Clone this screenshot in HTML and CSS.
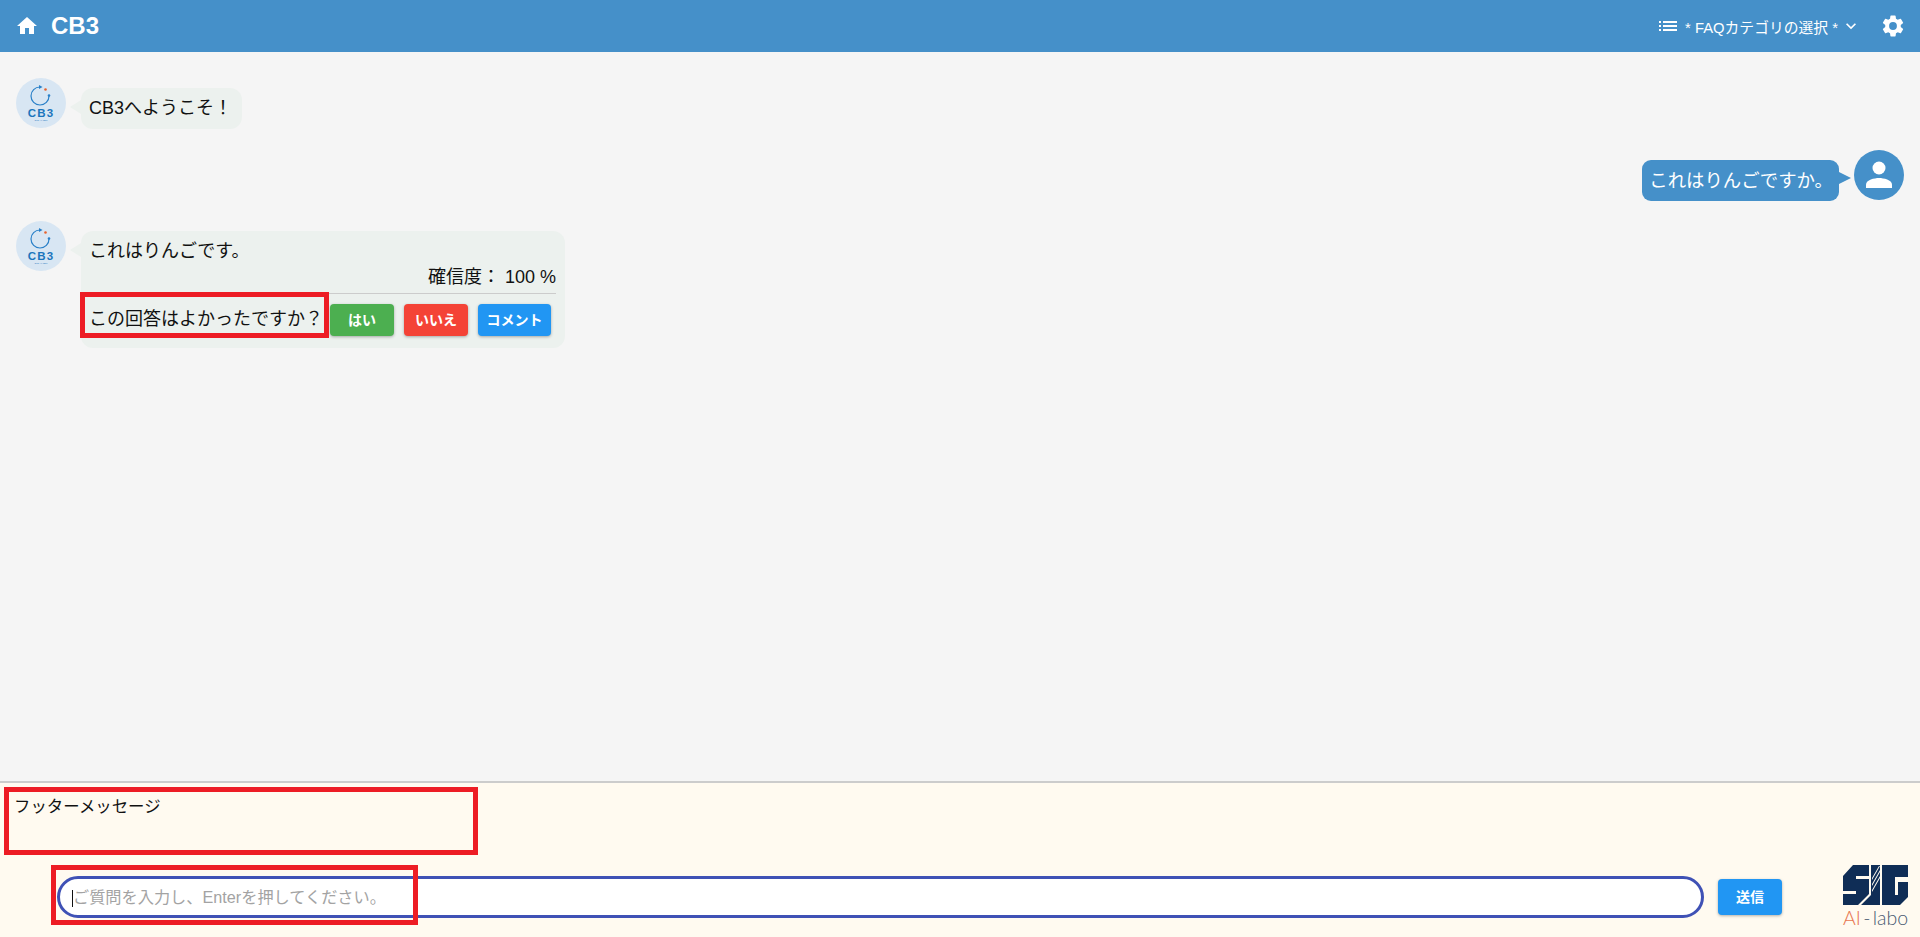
FILE: index.html
```html
<!DOCTYPE html>
<html lang="ja">

<head>
    <meta charset="UTF-8">
    <meta name="viewport" content="width=device-width, initial-scale=1.0">
    <title>CB3</title>
    <link rel="stylesheet" href="styles.css">
</head>

<body>
    <header class="topbar">
        <svg class="icon home-icon" viewBox="0 0 24 24"><path d="M10 20v-6h4v6h5v-8h3L12 3 2 12h3v8z"/></svg>
        <h1 class="brand">CB3</h1>
        <div class="category">
            <svg class="icon list-icon" viewBox="0 0 24 24"><path d="M3 13h2v-2H3v2zm0 4h2v-2H3v2zm0-8h2V7H3v2zm4 4h14v-2H7v2zm0 4h14v-2H7v2zM7 7v2h14V7H7z"/></svg>
            <span class="category-text">* FAQカテゴリの選択 *</span>
            <svg class="icon chevron-icon" viewBox="0 0 24 24"><path d="M7.41 8.59 12 13.17l4.59-4.58L18 10l-6 6-6-6z"/></svg>
        </div>
        <svg class="icon gear-icon" viewBox="0 0 24 24"><path d="M19.14 12.94c.04-.3.06-.61.06-.94 0-.32-.02-.64-.07-.94l2.03-1.58a.49.49 0 0 0 .12-.61l-1.92-3.32a.49.49 0 0 0-.59-.22l-2.39.96c-.5-.38-1.03-.7-1.62-.94l-.36-2.54a.48.48 0 0 0-.48-.41h-3.84a.47.47 0 0 0-.47.41l-.36 2.54c-.59.24-1.13.57-1.62.94l-2.39-.96a.48.48 0 0 0-.59.22L2.74 8.87c-.12.21-.08.47.12.61l2.03 1.58c-.05.3-.09.63-.09.94s.02.64.07.94l-2.03 1.58a.49.49 0 0 0-.12.61l1.92 3.32c.12.22.37.29.59.22l2.39-.96c.5.38 1.03.7 1.62.94l.36 2.54c.05.24.24.41.48.41h3.84c.24 0 .44-.17.47-.41l.36-2.54c.59-.24 1.13-.56 1.62-.94l2.39.96c.22.08.47 0 .59-.22l1.92-3.32c.12-.22.07-.47-.12-.61l-2.01-1.58zM12 15.6A3.6 3.6 0 1 1 12 8.4a3.6 3.6 0 0 1 0 7.2z"/></svg>
    </header>

    <main class="chat">
        <div class="row">
            <svg class="avatar" viewBox="0 0 50 50">
                <circle cx="25" cy="25" r="25" fill="#d8e6f3"/>
                <path d="M24 9a9 9 0 1 0 9 9" fill="none" stroke="#2a80c8" stroke-width="1.2"/>
                <path d="M26.500 9 23 7v4z" fill="#2a80c8"/>
                <circle cx="33" cy="17.500" r="1.300" fill="#2a80c8"/>
                <circle cx="29.500" cy="11.500" r="1.300" fill="#e8622c"/>
                <text class="avatar-name" x="25" y="39">CB3</text>
                <text class="avatar-sub" x="25" y="43">SIG AI-labo</text>
            </svg>
            <div class="bubble bot">CB3へようこそ！</div>
        </div>

        <div class="row user">
            <div class="bubble mine">これはりんごですか。</div>
            <svg class="avatar" viewBox="0 0 50 50">
                <circle cx="25" cy="25" r="25" fill="#4590c9"/>
                <circle cx="25" cy="18" r="6.500" fill="#fff"/>
                <path d="M12 38v-3.500c0-4.500 8.500-6.500 13-6.500s13 2 13 6.500V38z" fill="#fff"/>
            </svg>
        </div>

        <div class="row">
            <svg class="avatar" viewBox="0 0 50 50">
                <circle cx="25" cy="25" r="25" fill="#d8e6f3"/>
                <path d="M24 9a9 9 0 1 0 9 9" fill="none" stroke="#2a80c8" stroke-width="1.2"/>
                <path d="M26.500 9 23 7v4z" fill="#2a80c8"/>
                <circle cx="33" cy="17.500" r="1.300" fill="#2a80c8"/>
                <circle cx="29.500" cy="11.500" r="1.300" fill="#e8622c"/>
                <text class="avatar-name" x="25" y="39">CB3</text>
                <text class="avatar-sub" x="25" y="43">SIG AI-labo</text>
            </svg>
            <div class="bubble bot answer">
                <p class="answer-text">これはりんごです。</p>
                <p class="confidence">確信度： 100 %</p>
                <div class="feedback">
                    <span class="question">この回答はよかったですか？</span>
                    <button class="btn green">はい</button>
                    <button class="btn red">いいえ</button>
                    <button class="btn blue">コメント</button>
                </div>
            </div>
        </div>
    </main>

    <footer class="footer">
        <p class="footer-message">フッターメッセージ</p>
        <div class="input-row">
            <div class="input-box">
                <span class="caret"></span>
                <input class="question-input" type="text" placeholder="ご質問を入力し、Enterを押してください。">
            </div>
            <button class="btn blue send">送信</button>
            <div class="logo">
                <svg class="logo-mark" viewBox="0 0 65 40">
                    <path fill="#0f2d56" d="M0 11 10 0H26V11H13V14H26V29L15 40H0V29H13V26H0Z"/>
                    <path fill="#0f2d56" d="M28 0H37V40H18L28 30Z"/>
                    <path fill="#0f2d56" d="M39 0H65V12H52V30H55V17H65V32L57 40H39Z"/>
                    <path fill="#fdf9ef" d="M29 13 36 1H37L29 15ZM29 19 37 5V7L29 21ZM29 25 37 11V13L29 27Z"/>
                </svg>
                <div class="logo-text"><span class="logo-ai">AI</span> - labo</div>
            </div>
        </div>
    </footer>

    <div class="mark mark-question"></div>
    <div class="mark mark-footer"></div>
    <div class="mark mark-input"></div>
</body>

</html>
```
FILE: styles.css
```css
* {
    padding: 0;
    margin: 0;
    box-sizing: border-box;
}

body {
    width: 100%;
    height: 937px;
    display: flex;
    flex-direction: column;
    position: relative;
    overflow: hidden;
    background-color: #f5f5f5;
    color: #111;
    font-family: "Liberation Sans", "Noto Sans CJK JP", sans-serif;
    font-size: 18px;
}

.icon {
    fill: #fff;
    flex: none;
}

/* top bar */
.topbar {
    height: 52px;
    display: flex;
    align-items: center;
    padding: 0 14px 0 15px;
    background-color: #4590c9;
    color: #fff;
}

.home-icon {
    width: 24px;
    height: 24px;
}

.brand {
    margin-left: 12px;
    font-size: 24px;
    line-height: 1;
}

.category {
    margin-left: auto;
    display: flex;
    align-items: center;
    font-size: 14.8px;
}

.list-icon {
    width: 24px;
    height: 24px;
}

.category-text {
    margin-left: 5px;
}

.chevron-icon {
    width: 20px;
    height: 20px;
    margin-left: 3px;
}

.gear-icon {
    width: 26px;
    height: 26px;
    margin-left: 19px;
}

/* chat */
.chat {
    flex: 1;
    padding: 26px 16px 0;
}

.row {
    display: flex;
    align-items: flex-start;
    margin-bottom: 21px;
}

.row.user {
    justify-content: flex-end;
    margin-bottom: 20px;
}

.avatar {
    width: 50px;
    height: 50px;
    flex: none;
}

.avatar-name {
    font-size: 11.5px;
    font-weight: bold;
    fill: #1c75bc;
    text-anchor: middle;
    letter-spacing: 1.2px;
}

.avatar-sub {
    font-size: 2.5px;
    fill: #1c75bc;
    text-anchor: middle;
}

.bubble {
    position: relative;
    margin-top: 10px;
    padding: 8px;
    border-radius: 12px;
    line-height: 25px;
}

.bubble::before {
    content: "";
    position: absolute;
    top: 12px;
    border: 7px solid transparent;
}

.bot {
    margin-left: 15px;
    padding-right: 10px;
    background-color: #ecf1ee;
}

.bot::before {
    left: -11px;
    border-left-width: 0;
    border-right: 11px solid #ecf1ee;
}

.mine {
    margin-right: 15px;
    padding-left: 7px;
    padding-right: 6px;
    background-color: #4590c9;
    color: #fff;
    border-radius: 9px;
    font-size: 18.4px;
}

.mine::before {
    right: -12px;
    border-width: 6px;
    border-right-width: 0;
    border-left: 12px solid #4590c9;
}

.answer {
    width: 484px;
    padding: 8px 9px 12px 8px;
}

.answer-text {
    height: 26px;
}

.confidence {
    height: 29px;
    text-align: right;
    border-bottom: 1px solid #ccc;
}

.feedback {
    display: flex;
    align-items: center;
    margin-top: 10px;
}

.question {
    flex: none;
    padding-bottom: 1px;
    margin-right: 7px;
    white-space: nowrap;
}

.btn {
    flex: none;
    height: 32px;
    padding-bottom: 2px;
    border: none;
    border-radius: 4px;
    color: #fff;
    font-family: inherit;
    font-size: 14px;
    font-weight: bold;
    box-shadow: 0 1px 3px rgba(0, 0, 0, 0.3);
}

.feedback .btn {
    margin-right: 10px;
}

.green {
    width: 64px;
    background-color: #4caf50;
}

.red {
    width: 64px;
    background-color: #f44336;
}

.blue {
    width: 73px;
    background-color: #2196f3;
}

/* footer */
.footer {
    height: 156px;
    border-top: 2px solid #ccc;
    background-color: #fffaf0;
}

.footer-message {
    padding: 11px 0 0 14px;
    height: 93px;
    font-size: 16.4px;
    line-height: 24px;
}

.input-row {
    display: flex;
    align-items: flex-start;
    padding-left: 57px;
}

.input-box {
    position: relative;
    width: 1647px;
    height: 42px;
    border: 3px solid #3f51b5;
    border-radius: 21px;
    background-color: #fff;
}

.caret {
    position: absolute;
    left: 12px;
    top: 11px;
    width: 1px;
    height: 17px;
    background-color: #111;
}

.question-input {
    width: 100%;
    height: 100%;
    padding: 0 13px;
    border: none;
    outline: none;
    background: transparent;
    font-family: inherit;
    font-size: 16.2px;
}

.question-input::placeholder {
    color: #a3a3a3;
}

.send {
    width: 64px;
    height: 36px;
    margin: 3px 0 0 14px;
}

.logo {
    margin: -11px 0 0 61px;
    width: 65px;
}

.logo-mark {
    display: block;
    width: 65px;
    height: 40px;
}

.logo-text {
    margin-top: 1px;
    font-family: Lato, "Liberation Sans", sans-serif;
    font-size: 19.5px;
    line-height: 24px;
    color: #4a5a72;
    text-align: center;
    white-space: nowrap;
    font-weight: 300;
    word-spacing: -3px;
}

.logo-ai {
    color: #e8764f;
}

/* red marks drawn over the shot */
.mark {
    position: absolute;
    border: 5px solid #ed1c24;
}

.mark-question {
    left: 80px;
    top: 292px;
    width: 249px;
    height: 46px;
}

.mark-footer {
    left: 4px;
    top: 787px;
    width: 474px;
    height: 68px;
}

.mark-input {
    left: 51px;
    top: 865px;
    width: 367px;
    height: 60px;
}
```
